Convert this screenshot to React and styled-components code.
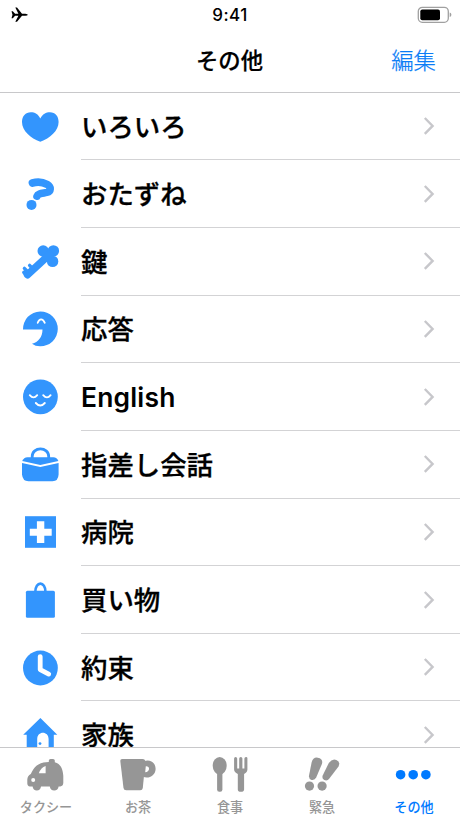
import React from "react";
import styled, { createGlobalStyle } from "styled-components";

const GlobalStyle = createGlobalStyle`
  * {
    box-sizing: border-box;
  }

  body {
    margin: 0;
    background-color: #fff;
    font-family: Inter, "Noto Sans CJK JP", sans-serif;
    overflow: hidden;
  }
`;

const Screen = styled.div`
  display: flex;
  flex-direction: column;
  width: 460px;
  height: 818px;
  background-color: #fff;
  color: #000;
`;

const StatusBar = styled.div`
  display: grid;
  grid-template-columns: 1fr auto 1fr;
  align-items: center;
  height: 29px;
  padding: 0 8px 0 10px;
  flex-shrink: 0;

  svg {
    display: block;
  }

  svg:last-child {
    justify-self: end;
  }
`;

const Time = styled.span`
  padding-top: 1px;
  padding-right: 2px;
  font-size: 17px;
  font-weight: 500;
  line-height: 28px;
  letter-spacing: 0.5px;
`;

const Navbar = styled.header`
  display: grid;
  grid-template-columns: 1fr auto 1fr;
  align-items: center;
  height: 64px;
  padding: 0 24px;
  border-bottom: 1px solid #c8c8ca;
  flex-shrink: 0;
`;

const Title = styled.h1`
  grid-column: 2;
  margin: 1px 0 0;
  padding-right: 1px;
  font-size: 22.4px;
  font-weight: 500;
  line-height: 30px;
  -webkit-text-stroke: 0.2px #000;
`;

const EditButton = styled.button`
  justify-self: end;
  margin-top: 1px;
  padding: 0;
  border: none;
  background: none;
  color: #0a7cf6;
  font-family: inherit;
  font-size: 22.4px;
  line-height: 30px;
  font-weight: 300;
  cursor: pointer;
  -webkit-text-stroke: 0.25px #0a7cf6;
`;

const List = styled.ul`
  flex: 1;
  min-height: 0;
  margin: -0.3px 0 0;
  padding: 0;
  list-style: none;
  overflow: hidden;
`;

const Row = styled.li`
  display: flex;
  align-items: center;
  height: 67.65px;
  padding-left: 20px;
`;

const RowIcon = styled.svg`
  width: 40px;
  height: 40px;
  margin-right: 21px;
  flex-shrink: 0;
  color: #3395fd;
`;

const RowBody = styled.div`
  display: flex;
  flex: 1;
  align-items: center;
  justify-content: space-between;
  height: 100%;
  padding-right: 25px;
  border-bottom: 1px solid #d3d3d5;
`;

const RowLabel = styled.span`
  padding-top: 1px;
  font-size: 26.4px;
  font-weight: ${(props) => (props.$latin ? 600 : 500)};
  line-height: 36px;
  letter-spacing: ${(props) => (props.$latin ? "0.2px" : "0")};
  -webkit-text-stroke: ${(props) => (props.$latin ? "0" : "0.3px #000")};
`;

const TabBar = styled.nav`
  display: grid;
  grid-template-columns: repeat(5, 1fr);
  height: 71px;
  border-top: 1px solid #c8c8ca;
  flex-shrink: 0;
`;

const Tab = styled.div`
  display: flex;
  flex-direction: column;
  align-items: center;
  padding-top: 7px;
  color: ${(props) => (props.$active ? "#007aff" : "#969696")};

  svg {
    width: 40px;
    height: 40px;
  }
`;

const TabLabel = styled.span`
  margin-top: 3px;
  font-size: 13.1px;
  font-weight: 500;
  line-height: 19px;
`;

const Heart = () => (
  <path
    fill="currentColor"
    d="M20.3 11.5C22.5 7 26 5.2 30 5.2C35.2 5.2 38.6 9 38.6 15C38.6 23.5 30 31.5 20.3 34.8C10.6 31.5 2 23.5 2 15C2 9 5.6 5.2 10.8 5.2C14.8 5.2 18.2 7 20.3 11.5Z"
  />
);

const Question = () => (
  <>
    <path
      d="M12.4 9C17 7.7 23 8.2 27 10.3C31.6 13 31 17.4 26.8 18.4C22 19.4 18 19.4 17 22.2"
      fill="none"
      stroke="currentColor"
      strokeWidth="7.6"
      strokeLinecap="round"
      strokeLinejoin="round"
    />
    <circle cx="11.5" cy="30.9" r="5" fill="currentColor" />
  </>
);

const KeyIcon = () => (
  <>
    <g fill="currentColor">
      <circle cx="23.2" cy="9" r="5.7" />
      <circle cx="33.4" cy="8.9" r="5.7" />
      <circle cx="32.6" cy="19.4" r="5.7" />
    </g>
    <g fill="none" stroke="currentColor" strokeLinecap="round">
      <path d="M29.5 12.5L7.5 32.8" strokeWidth="7.4" />
      <path d="M4.4 26.4L7 29M3.8 30.4L6 33M9.6 23.4L13 27" strokeWidth="3.4" />
    </g>
  </>
);

const Talking = () => (
  <>
    <path
      fill="currentColor"
      d="M3 20.4A17.4 17.4 0 1 1 20 37.3Q15.3 37.3 12 34.7C18.4 33 22.4 28 22.5 20.4Z"
    />
    <path d="M17.7 13.8Q19 10.3 21.1 10.3Q23.2 10.3 24.8 13.8" fill="none" stroke="#fff" strokeWidth="1.8" strokeLinecap="round" />
  </>
);

const Smile = () => (
  <>
    <circle cx="20.4" cy="19.8" r="17.4" fill="currentColor" />
    <path
      d="M9.8 18.2Q13.5 22.6 17.2 18.2M23.2 18.2Q27 22.6 30.6 18.2M15.8 26Q20.3 31 24.8 26"
      fill="none"
      stroke="#fff"
      strokeWidth="1.9"
      strokeLinecap="round"
    />
  </>
);

const Handbag = () => (
  <>
    <path d="M12.2 14V11.5C12.2 1.4 28.7 1.4 28.7 11.5V14" fill="none" stroke="currentColor" strokeWidth="2.8" />
    <path fill="currentColor" d="M2.2 16Q3.8 12.2 7.5 12.2H33.3Q37 12.2 38.4 16L20.3 20Z" />
    <path fill="currentColor" d="M2 18L20.3 22L38.6 18V29.5Q38.2 36.3 32.5 36.3H8.4Q2.7 36.3 2 29.5Z" />
  </>
);

const Hospital = () => (
  <>
    <path fill="currentColor" d="M5 4.2H36V35.8H5Z" />
    <path fill="#fff" d="M16.9 9.2H24.3V16.7H31.7V23.8H24.3V31H16.9V23.8H9.8V16.7H16.9Z" />
  </>
);

const ShoppingBag = () => (
  <>
    <path d="M15.3 12C15.3 0.8 25.5 0.8 25.5 12" fill="none" stroke="currentColor" strokeWidth="2.6" />
    <rect x="5.9" y="10.8" width="29" height="27" rx="1.5" fill="currentColor" />
  </>
);

const Clock = () => (
  <>
    <circle cx="20.4" cy="20" r="17.4" fill="currentColor" />
    <path d="M20.2 8.6V21.6L28.7 26.1" fill="none" stroke="#fff" strokeWidth="4.8" strokeLinecap="round" strokeLinejoin="round" />
  </>
);

const House = () => (
  <>
    <path fill="currentColor" d="M20.4 3L37.3 19.8H33.8V37H28.6V24C28.6 15.5 17.2 15.5 17.2 24V37H6.7V19.8H3.2Z" />
    <circle cx="20" cy="28.6" r="1.4" fill="currentColor" />
  </>
);

const Taxi = () => (
  <>
    <path
      fill="currentColor"
      d="M22.8 6.9V5.6Q22.8 4 24.6 4H27Q28.8 4 28.8 5.6V7.2C34.6 8.8 37 14 37.3 21V28Q37 31.2 34.3 31.4H32.6Q32 35.4 28.2 35.4Q24.4 35.4 23.8 31.4H15Q14.4 35.4 10.8 35.4Q7.2 35.4 6.6 31.4H4Q1.3 31.2 1.3 28.2V24.5Q1.5 20.8 4.8 19C8 12 12 7.2 22.8 6.9Z"
    />
    <path fill="#fff" d="M19.6 10.9Q15 12.2 12.8 18.2H19.6Z" />
    <circle cx="7.2" cy="25" r="2" fill="#fff" />
  </>
);

const Cup = () => (
  <>
    <path fill="currentColor" d="M4 4H24.5Q27.5 4 27.3 7L24.8 33Q24.5 35.2 22.2 35.2H8.3Q5.8 35.2 5.5 33L2.3 6Q2.2 4 4 4Z" />
    <path
      fill="currentColor"
      fillRule="evenodd"
      d="M26 6.3C32 3.8 37.8 7.7 37.6 14.2C37.3 20.5 30.8 24.2 25 21.8ZM27.8 11.2L27.2 17.3C32 17 32.4 10.8 27.8 11.2Z"
    />
  </>
);

const Cutlery = () => (
  <g fill="currentColor">
    <ellipse cx="9.7" cy="10.8" rx="7" ry="8.8" />
    <rect x="7.1" y="14" width="5.3" height="22.8" rx="2.2" />
    <path d="M24.1 3.5Q24.1 2 25.6 2T27.2 3.5V13.5H29.2V3.5Q29.2 2 30.8 2T32.4 3.5V13.5H34.4V3.5Q34.4 2 36 2T37.4 3.5V14.5Q37.4 17.3 34.1 19V34.4Q34 36.8 30.9 36.8T27.8 34.4V19Q24.1 17.3 24.1 14.5Z" />
  </g>
);

const Exclamation = () => (
  <g fill="currentColor">
    <path d="M9.6 7.5Q11 2 15.8 2.7Q21.3 3.6 20 8.8L14.2 22.6Q12.8 25.5 9.6 24.9Q6.6 24 7 20.8Z" />
    <path d="M26.8 8Q30.2 3.2 34.3 4.9Q38.8 6.8 36.5 11.4L27.2 23.8Q25.2 26.4 22.2 25Q19.5 23.4 20.8 20.2Z" />
    <circle cx="7.5" cy="31.1" r="4.6" />
    <circle cx="20.1" cy="31.1" r="4.6" />
  </g>
);

const More = () => (
  <g fill="currentColor">
    <circle cx="6.6" cy="19.7" r="4.8" />
    <circle cx="19.2" cy="19.7" r="4.8" />
    <circle cx="31.9" cy="19.7" r="4.8" />
  </g>
);

const Airplane = () => (
  <svg width="18" height="16" viewBox="0 0 18 16">
    <path d="M1.5 4.2H2.8L5.1 6.8H8.4L5.3 0.6H7L12 6.7H15.3Q17.8 7 17.8 7.8T15.3 8.7H12L7 14.8H5.3L8.4 8.7H5.1L2.8 11.3H1.5L2.5 7.8Z" />
  </svg>
);

const Battery = () => (
  <svg width="36" height="18" viewBox="0 0 36 18">
    <rect x="2.3" y="1.3" width="30" height="15" rx="4" fill="none" stroke="#a0a0a0" strokeWidth="1.3" />
    <rect x="4.3" y="3.4" width="19.7" height="10.8" rx="2" />
    <path d="M33.7 6.5Q35.4 6.9 35.4 8.8T33.7 11.1Z" fill="#a0a0a0" />
  </svg>
);

const Chevron = () => (
  <svg width="12" height="20" viewBox="0 0 12 20">
    <path d="M1.8 2L9.6 9.9L1.8 17.8" fill="none" stroke="#c7c7cb" strokeWidth="2.4" />
  </svg>
);

const categories = [
  { label: "いろいろ", Icon: Heart },
  { label: "おたずね", Icon: Question },
  { label: "鍵", Icon: KeyIcon },
  { label: "応答", Icon: Talking },
  { label: "English", Icon: Smile, latin: true },
  { label: "指差し会話", Icon: Handbag },
  { label: "病院", Icon: Hospital },
  { label: "買い物", Icon: ShoppingBag },
  { label: "約束", Icon: Clock },
  { label: "家族", Icon: House },
];

const tabs = [
  { label: "タクシー", Icon: Taxi },
  { label: "お茶", Icon: Cup },
  { label: "食事", Icon: Cutlery },
  { label: "緊急", Icon: Exclamation },
  { label: "その他", Icon: More, active: true },
];

function App() {
  return (
    <>
      <GlobalStyle />
      <Screen>
        <StatusBar>
          <Airplane />
          <Time>9:41</Time>
          <Battery />
        </StatusBar>
        <Navbar>
          <Title>その他</Title>
          <EditButton>編集</EditButton>
        </Navbar>
        <List>
          {categories.map(({ label, Icon, latin }) => (
            <Row key={label}>
              <RowIcon viewBox="0 0 40 40">
                <Icon />
              </RowIcon>
              <RowBody>
                <RowLabel $latin={latin}>{label}</RowLabel>
                <Chevron />
              </RowBody>
            </Row>
          ))}
        </List>
        <TabBar>
          {tabs.map(({ label, Icon, active }) => (
            <Tab key={label} $active={active}>
              <svg viewBox="0 0 40 40">
                <Icon />
              </svg>
              <TabLabel>{label}</TabLabel>
            </Tab>
          ))}
        </TabBar>
      </Screen>
    </>
  );
}

export default App;
